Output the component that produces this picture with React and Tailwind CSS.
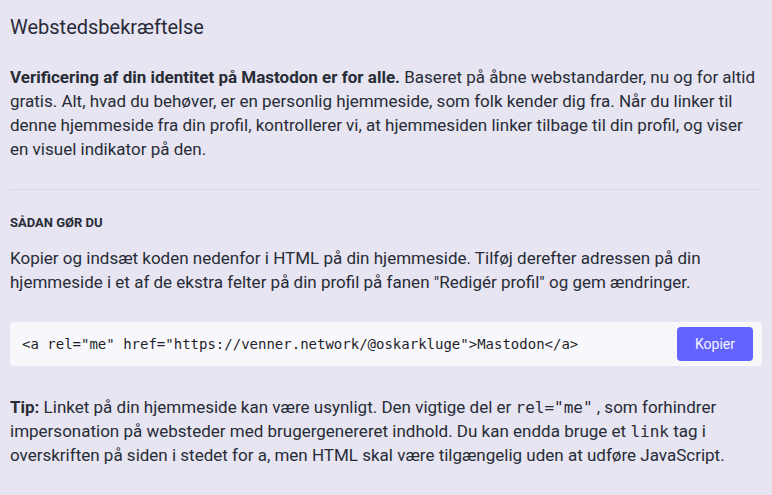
import React from 'react';

const App = () => {
  const code = '<a rel="me" href="https://venner.network/@oskarkluge">Mastodon</a>';
  const mono = { fontFamily: '"DejaVu Sans Mono", "Liberation Mono", monospace' };

  return (
    <div className="min-h-[495px] bg-[#e6e5f1] px-[10px] pt-[13px] text-[#282c37]" style={{ fontFamily: 'Roboto, "Noto Sans", sans-serif' }}>
      <h2 className="text-[20px] leading-[28px] font-normal text-[#2a2a3a]">Webstedsbekræftelse</h2>

      {/* Intro */}
      <p className="mt-[24px] text-[17px] leading-[24px]">
        <strong className="font-bold">Verificering af din identitet på Mastodon er for alle.</strong> Baseret på åbne webstandarder, nu og for altid gratis. Alt, hvad du behøver, er en personlig hjemmeside, som folk kender dig fra. Når du linker til denne hjemmeside fra din profil, kontrollerer vi, at hjemmesiden linker tilbage til din profil, og viser en visuel indikator på den.
      </p>

      <hr className="mt-[28px] border-0 border-t border-[#d7d6e4]" />

      <h4 className="mt-[25px] text-[13px] leading-[16px] font-bold uppercase text-[#282c37]">Sådan gør du</h4>

      <p className="mt-[15px] text-[17px] leading-[24px]">
        Kopier og indsæt koden nedenfor i HTML på din hjemmeside. Tilføj derefter adressen på din hjemmeside i et af de ekstra felter på din profil på fanen "Redigér profil" og gem ændringer.
      </p>

      {/* Code box */}
      <div className="mt-[28px] flex h-[44px] items-center justify-between rounded-[4px] bg-[#f8f8fc] pl-[12px] pr-[9px]">
        <span className="text-[14px] text-[#1f1f2b]" style={mono}>{code}</span>
        <button className="h-[34px] w-[76px] rounded-[4px] bg-[#6364ff] text-[14px] text-[#f4f4ff]">Kopier</button>
      </div>

      {/* Tip */}
      <p className="mt-[29px] text-[17px] leading-[24px]">
        <strong className="font-bold">Tip:</strong> Linket på din hjemmeside kan være usynligt. Den vigtige del er{' '}
        <code className="text-[16px] leading-[16px]" style={mono}>rel="me"</code> , som forhindrer impersonation på websteder med brugergenereret indhold. Du kan endda bruge et{' '}
        <code className="text-[16px] leading-[16px]" style={mono}>link</code> tag i overskriften på siden i stedet for a, men HTML skal være tilgængelig uden at udføre JavaScript.
      </p>
    </div>
  );
};

export default App;
